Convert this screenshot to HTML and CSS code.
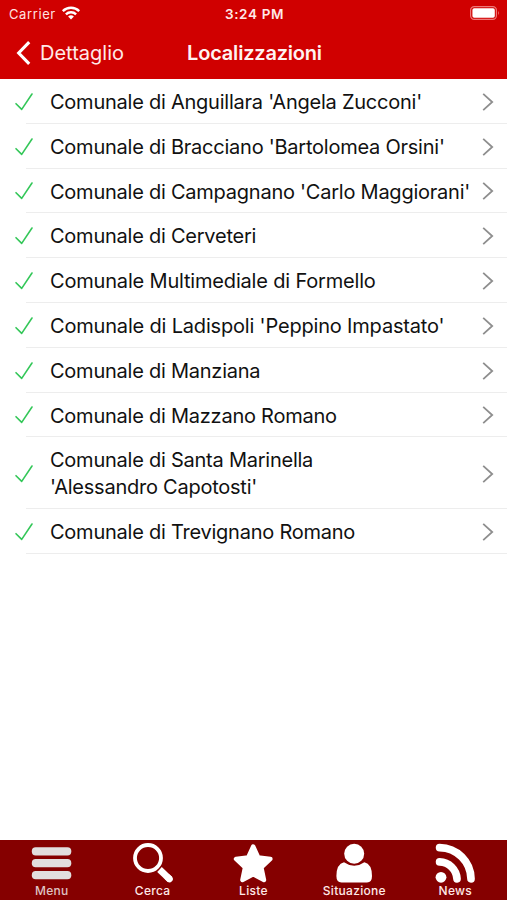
FILE: index.html
```html
<!DOCTYPE html>
<html lang="it">
<head>
<meta charset="utf-8">
<title>Localizzazioni</title>
<link rel="stylesheet" href="styles.css">
</head>
<body>
<svg class="defs" aria-hidden="true">
  <symbol id="check" viewBox="0 0 20 20"><path d="M2 11.7 L7.7 17.4 L18 2" fill="none" stroke="#34c759" stroke-width="1.6" stroke-linecap="round" stroke-linejoin="round"/></symbol>
  <symbol id="chev" viewBox="0 0 12 20"><path d="M1.2 1.8 L10.2 10 L1.2 18.2" fill="none" stroke="#8e8e8e" stroke-width="1.8"/></symbol>
</svg>
<header class="top">
  <div class="status">
    <div class="carrier"><span>Carrier</span>
      <svg width="20" height="14" viewBox="0 0 20 14"><g fill="none" stroke="#fff" stroke-width="2.4"><path d="M1.8 5.1 A11.7 11.7 0 0 1 18.2 5.1"/><path d="M4.9 8.3 A7.3 7.3 0 0 1 15.1 8.3"/></g><path d="M7.1 10.6 A4.1 4.1 0 0 1 12.9 10.6 L10 13.5Z" fill="#fff"/></svg>
    </div>
    <span class="time">3:24 PM</span>
    <svg class="battery" width="30" height="14" viewBox="0 0 30 14"><rect x=".6" y=".6" width="25.8" height="12.8" rx="3.6" fill="none" stroke="#e77" stroke-width="1.2"/><rect x="2.4" y="2.2" width="22.4" height="9.6" rx="1.8" fill="#fff"/><path d="M28 4.8 Q29.8 7 28 9.2Z" fill="#e77"/></svg>
  </div>
  <nav class="nav">
    <a class="back"><svg width="16" height="26" viewBox="0 0 16 26"><path d="M14.2 2.2 L3.7 13 L14.2 23.8" fill="none" stroke="#fff" stroke-width="3.1"/></svg><span>Dettaglio</span></a>
    <h1>Localizzazioni</h1>
  </nav>
</header>
<main class="list">
  <div class="row"><svg class="check"><use href="#check"/></svg><span class="name">Comunale di Anguillara 'Angela Zucconi'</span><svg class="chev"><use href="#chev"/></svg></div>
  <div class="row"><svg class="check"><use href="#check"/></svg><span class="name">Comunale di Bracciano 'Bartolomea Orsini'</span><svg class="chev"><use href="#chev"/></svg></div>
  <div class="row"><svg class="check"><use href="#check"/></svg><span class="name">Comunale di Campagnano 'Carlo Maggiorani'</span><svg class="chev"><use href="#chev"/></svg></div>
  <div class="row"><svg class="check"><use href="#check"/></svg><span class="name">Comunale di Cerveteri</span><svg class="chev"><use href="#chev"/></svg></div>
  <div class="row"><svg class="check"><use href="#check"/></svg><span class="name loose">Comunale Multimediale di Formello</span><svg class="chev"><use href="#chev"/></svg></div>
  <div class="row"><svg class="check"><use href="#check"/></svg><span class="name loose">Comunale di Ladispoli 'Peppino Impastato'</span><svg class="chev"><use href="#chev"/></svg></div>
  <div class="row"><svg class="check"><use href="#check"/></svg><span class="name">Comunale di Manziana</span><svg class="chev"><use href="#chev"/></svg></div>
  <div class="row"><svg class="check"><use href="#check"/></svg><span class="name">Comunale di Mazzano Romano</span><svg class="chev"><use href="#chev"/></svg></div>
  <div class="row tall"><svg class="check"><use href="#check"/></svg><span class="name">Comunale di Santa Marinella<br>'Alessandro Capotosti'</span><svg class="chev"><use href="#chev"/></svg></div>
  <div class="row"><svg class="check"><use href="#check"/></svg><span class="name">Comunale di Trevignano Romano</span><svg class="chev"><use href="#chev"/></svg></div>
</main>
<footer class="tabs">
  <a class="tab dim"><svg viewBox="0 0 42 42"><g fill="#e2dede"><rect x=".8" y="5.2" width="39.5" height="8.2" rx="3.9"/><rect x=".8" y="17" width="39.5" height="8.2" rx="3.9"/><rect x=".8" y="29" width="39.5" height="8.2" rx="3.9"/></g></svg><span>Menu</span></a>
  <a class="tab"><svg viewBox="0 0 42 42"><g fill="none" stroke="#fff"><circle cx="16" cy="16" r="13" stroke-width="3.8"/><path d="M27.5 27.5 L38 37.5" stroke-width="6.6"/><path d="M36 35.6 L37.5 37" stroke-width="6.6" stroke-linecap="round"/></g></svg><span>Cerca</span></a>
  <a class="tab"><svg viewBox="0 0 42 42"><path d="M21.2 4.5 L26.2 15.5 L38.4 17 L29.4 25.5 L32 38 L21.2 32.2 L10.4 38 L13 25.5 L4 17 L16.2 15.5Z" fill="#fff" stroke="#fff" stroke-width="4.4" stroke-linejoin="round"/></svg><span>Liste</span></a>
  <a class="tab"><svg viewBox="0 0 42 42"><circle cx="21.2" cy="11.7" r="10" fill="#fff"/><path d="M11 20.2 Q21.2 27.3 31.4 20.2 Q39 22 39 34 Q39 40.5 34 40.5 H8.5 Q3.4 40.5 3.4 34 Q3.4 22 11 20.2Z" fill="#fff"/></svg><span>Situazione</span></a>
  <a class="tab"><svg viewBox="0 0 42 42"><circle cx="7" cy="35.3" r="5.4" fill="#fff"/><g fill="none" stroke="#fff" stroke-width="7.7" stroke-linecap="round"><path d="M5.6 19.8 A18 18 0 0 1 23 36.8"/><path d="M5.6 5.6 A31.7 31.7 0 0 1 37 36.8"/></g></svg><span>News</span></a>
</footer>
</body>
</html>
```

FILE: styles.css
```css
* { box-sizing: border-box; }
body {
  margin: 0;
  width: 507px;
  height: 900px;
  display: flex;
  flex-direction: column;
  background: #fff;
  color: #111;
  font-family: Inter, "Liberation Sans", sans-serif;
  overflow: hidden;
}
.defs { position: absolute; width: 0; height: 0; }
svg { display: block; flex: none; }
.top {
  height: 79px;
  flex: none;
  background: #d00000;
  color: #fff;
}
.status {
  height: 27px;
  display: grid;
  grid-template-columns: 1fr auto 1fr;
  align-items: center;
  padding: 0 7px 0 9px;
  font-size: 13px;
}
.carrier { display: flex; gap: 5px; align-items: center; color: #ffe3e0; letter-spacing: .6px; }
.carrier svg { margin-top: -1px; }
.time { font-size: 13.5px; font-weight: 600; letter-spacing: .65px; color: #ffe9e7; }
.battery { justify-self: end; margin-top: -1px; }
.nav {
  height: 52px;
  display: grid;
  grid-template-columns: 1fr auto 1fr;
  align-items: center;
  padding: 0 13px 0 15px;
}
.back { display: flex; align-items: center; gap: 9px; font-size: 20px; color: #ffe9e7; letter-spacing: 0; }
.nav h1 { margin: 0; font-size: 20px; font-weight: 600; letter-spacing: -.2px; color: #fff3f2; }
.list { flex: 1; }
.row {
  height: 44.8px;
  display: flex;
  align-items: center;
  padding: 1px 13px 0 14px;
  background: linear-gradient(#ededed, #ededed) 26px 100% / 481px 1px no-repeat;
}
.row.tall { height: 71.7px; }
.check { width: 20px; height: 20px; }
.chev { width: 12px; height: 20px; }
.name { flex: 1; margin: 1px 0 0 16px; font-size: 20px; line-height: 26.8px; letter-spacing: -.24px; white-space: nowrap; }
.name.loose { letter-spacing: -.18px; }
.tabs {
  height: 60px;
  flex: none;
  display: grid;
  grid-template-columns: repeat(5, 100.9px);
  justify-content: center;
  padding-top: 2px;
  background: #850000;
  color: #ffe9e7;
}
.tab { display: flex; flex-direction: column; align-items: center; font-size: 12px; font-weight: 500; line-height: 14px; letter-spacing: .3px; }
.tab svg { width: 42px; height: 42px; }
.dim { color: #dfc3c3; }
```
